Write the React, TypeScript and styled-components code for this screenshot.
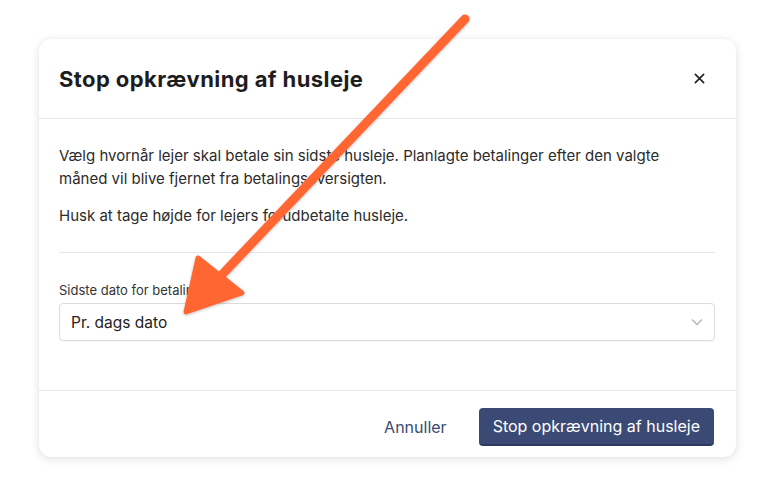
import React from 'react'
import styled, { createGlobalStyle } from 'styled-components'

const GlobalStyle = createGlobalStyle`
  html, body {
    margin: 0;
    padding: 0;
    background: #ffffff;
    font-family: Inter, "Noto Sans", sans-serif;
    -webkit-font-smoothing: antialiased;
  }
  * { box-sizing: border-box; }
`

const Page = styled.div`
  position: relative;
  width: 775px;
  height: 496px;
  padding: 39px 39px 0 39px;
  overflow: hidden;
`

const Modal = styled.div`
  width: 697px;
  height: 418px;
  background: #fff;
  border-radius: 12px;
  box-shadow: 0 2px 10px rgba(0, 0, 0, 0.12), 0 0 1px rgba(0, 0, 0, 0.08);
  display: flex;
  flex-direction: column;
`

const Header = styled.div`
  height: 80px;
  display: flex;
  align-items: center;
  justify-content: space-between;
  padding: 0 30px 0 20px;
  border-bottom: 1px solid #e6e6e6;
`

const Title = styled.h1`
  margin: 0;
  font-size: 22px;
  font-weight: 700;
  color: #1d1d1f;
  letter-spacing: 0.4px;
`

const CloseButton = styled.button`
  border: none;
  background: none;
  padding: 0;
  width: 14px;
  height: 14px;
  display: flex;
  align-items: center;
  justify-content: center;
  color: #222;
  cursor: pointer;
`

const Body = styled.div`
  padding: 25px 21px 49px 20px;
  border-bottom: 1px solid #e6e6e6;
`

const Text = styled.p<{ $gap?: number }>`
  margin: 0 0 ${(p) => p.$gap ?? 0}px 0;
  max-width: 640px;
  font-size: 15px;
  line-height: 23px;
  color: #2b2b2b;
`

const Divider = styled.hr`
  border: none;
  border-top: 1px solid #e6e6e6;
  margin: 25px 0 28px 0;
`

const Label = styled.label`
  display: block;
  font-size: 13px;
  line-height: 18px;
  color: #333;
  margin-bottom: 4px;
`

const Select = styled.div`
  height: 38px;
  border: 1px solid #dcdcdc;
  border-radius: 4px;
  display: flex;
  align-items: center;
  justify-content: space-between;
  padding: 0 11px 0 11px;
  font-size: 15.5px;
  color: #222;
  box-shadow: 0 1px 1px rgba(0, 0, 0, 0.03);
`

const Footer = styled.div`
  flex: 1;
  display: flex;
  align-items: flex-start;
  justify-content: flex-end;
  gap: 32px;
  padding: 17px 22px 0 20px;
`

const LinkButton = styled.button`
  border: none;
  background: none;
  height: 38px;
  padding: 0;
  font-family: inherit;
  font-size: 16px;
  color: #3a4a72;
  cursor: pointer;
`

const PrimaryButton = styled.button`
  height: 38px;
  padding: 0 14px;
  border: none;
  border-radius: 4px;
  background: #3b4a75;
  border-bottom: 2px solid #2c3960;
  font-family: inherit;
  font-size: 16px;
  color: #fff;
  cursor: pointer;
`

const ArrowOverlay = styled.svg`
  position: absolute;
  left: 0;
  top: 0;
  pointer-events: none;
`

export default function App() {
  return (
    <>
      <GlobalStyle />
      <Page>
        <Modal>
          <Header>
            <Title>Stop opkrævning af husleje</Title>
            <CloseButton aria-label="Luk">
              <svg width="11" height="11" viewBox="0 0 12 12">
                <path d="M1.5 1.5 L10.5 10.5 M10.5 1.5 L1.5 10.5" stroke="currentColor" strokeWidth="1.8" strokeLinecap="round" />
              </svg>
            </CloseButton>
          </Header>
          <Body>
            <Text $gap={14}>
              Vælg hvornår lejer skal betale sin sidste husleje. Planlagte betalinger efter den valgte
              måned vil blive fjernet fra betalingsoversigten.
            </Text>
            <Text>Husk at tage højde for lejers forudbetalte husleje.</Text>
            <Divider />
            <Label>Sidste dato for betaling</Label>
            <Select>
              <span>Pr. dags dato</span>
              <svg width="12" height="8" viewBox="0 0 12 8">
                <path d="M1 1.5 L6 6.5 L11 1.5" fill="none" stroke="#b5b5b5" strokeWidth="1.3" />
              </svg>
            </Select>
          </Body>
          <Footer>
            <LinkButton>Annuller</LinkButton>
            <PrimaryButton>Stop opkrævning af husleje</PrimaryButton>
          </Footer>
        </Modal>
        <ArrowOverlay width="775" height="496" viewBox="0 0 775 496">
          <defs>
            <filter id="sh" x="-20%" y="-20%" width="140%" height="140%">
              <feDropShadow dx="0" dy="1" stdDeviation="1.5" floodColor="#000" floodOpacity="0.25" />
            </filter>
          </defs>
          <g filter="url(#sh)" fill="#ff6633" stroke="#ff6633" strokeLinejoin="round" strokeLinecap="round">
            <line x1="465" y1="19" x2="215" y2="282" strokeWidth="9" />
            <polygon points="186,312 198,258 242,293" strokeWidth="5" />
          </g>
        </ArrowOverlay>
      </Page>
    </>
  )
}
